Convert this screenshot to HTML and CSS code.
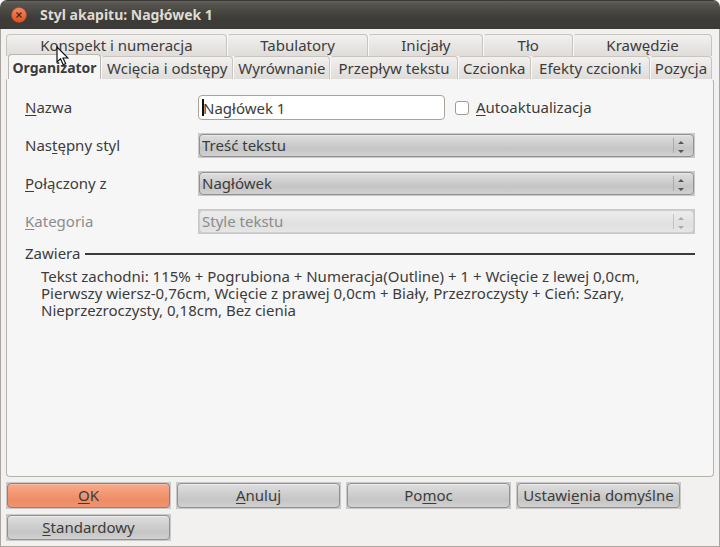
FILE: index.html
```html
<!DOCTYPE html>
<html lang="pl">
<head>
<meta charset="utf-8">
<title>Styl akapitu: Nagłówek 1</title>
<link rel="stylesheet" href="styles.css">
</head>
<body>
<main class="window">
  <header class="titlebar">
    <button class="close" type="button" aria-label="Zamknij">
      <svg viewBox="0 0 16 16" width="16" height="16" aria-hidden="true">
        <defs><linearGradient id="closeFill" x1="0" y1="0" x2="0" y2="1"><stop offset="0" stop-color="#f58a61"/><stop offset="1" stop-color="#e0511f"/></linearGradient></defs>
        <circle cx="8" cy="8" r="7.5" fill="url(#closeFill)" stroke="#b5482a" stroke-width=".6"/>
        <path d="M5.5 5.5l5 5M10.5 5.5l-5 5" stroke="#4b241a" stroke-width="1.2"/>
      </svg>
    </button>
    <h1>Styl akapitu: Nagłówek 1</h1>
  </header>
  <div class="content">
    <nav class="tabs" role="tablist">
      <div class="tab-row back">
        <button class="tab" type="button" role="tab">Konspekt i numeracja</button>
        <button class="tab" type="button" role="tab">Tabulatory</button>
        <button class="tab" type="button" role="tab">Inicjały</button>
        <button class="tab" type="button" role="tab">Tło</button>
        <button class="tab" type="button" role="tab">Krawędzie</button>
      </div>
      <div class="tab-row front">
        <button class="tab selected" type="button" role="tab" aria-selected="true">Organizator</button>
        <button class="tab" type="button" role="tab">Wcięcia i odstępy</button>
        <button class="tab" type="button" role="tab">Wyrównanie</button>
        <button class="tab" type="button" role="tab">Przepływ tekstu</button>
        <button class="tab" type="button" role="tab">Czcionka</button>
        <button class="tab" type="button" role="tab">Efekty czcionki</button>
        <button class="tab" type="button" role="tab">Pozycja</button>
      </div>
    </nav>
    <section class="panel" role="tabpanel">
      <div class="form">
        <label for="name"><u>N</u>azwa</label>
        <div class="name-line">
          <div class="text-box"><input id="name" type="text" value="Nagłówek 1"><span class="caret"></span></div>
          <input id="auto" class="check" type="checkbox">
          <label for="auto"><u>A</u>utoaktualizacja</label>
        </div>
        <label for="next">Nas<u>t</u>ępny styl</label>
        <div class="combo">
          <select id="next"><option>Treść tekstu</option></select>
          <svg class="arrows" viewBox="0 0 14 15" width="14" height="15" aria-hidden="true"><path class="rule" d="M.5 0v15"/><path d="M5 6l3-3 3 3zM5 12l3 3 3-3z"/></svg>
        </div>
        <label for="linked"><u>P</u>ołączony z</label>
        <div class="combo">
          <select id="linked"><option>Nagłówek</option></select>
          <svg class="arrows" viewBox="0 0 14 15" width="14" height="15" aria-hidden="true"><path class="rule" d="M.5 0v15"/><path d="M5 6l3-3 3 3zM5 12l3 3 3-3z"/></svg>
        </div>
        <label for="category" class="muted"><u>K</u>ategoria</label>
        <div class="combo disabled">
          <select id="category" disabled><option>Style tekstu</option></select>
          <svg class="arrows" viewBox="0 0 14 15" width="14" height="15" aria-hidden="true"><path class="rule" d="M.5 0v15"/><path d="M5 6l3-3 3 3zM5 12l3 3 3-3z"/></svg>
        </div>
      </div>
      <h2>Zawiera</h2>
      <p>Tekst zachodni: 115% + Pogrubiona + Numeracja(Outline) + 1 + Wcięcie z lewej 0,0cm,<br>Pierwszy wiersz-0,76cm, Wcięcie z prawej 0,0cm + Biały, Przezroczysty + Cień: Szary,<br>Nieprzezroczysty, 0,18cm, Bez cienia</p>
    </section>
    <footer class="actions">
      <button class="action primary" type="button"><span><u>O</u>K</span></button>
      <button class="action" type="button"><span><u>A</u>nuluj</span></button>
      <button class="action" type="button"><span>Po<u>m</u>oc</span></button>
      <button class="action" type="button"><span>Ustawi<u>e</u>nia domyślne</span></button>
      <button class="action" type="button"><span><u>S</u>tandardowy</span></button>
    </footer>
  </div>
  <svg class="pointer" viewBox="0 0 13 20" width="13" height="20" aria-hidden="true"><path d="M1 1v15l3.5-3.2 2.7 6 2.5-1.2-2.7-5.6H12z" fill="#fff" stroke="#111" stroke-width="1.2"/></svg>
</main>
</body>
</html>
```
FILE: styles.css
```css
* { box-sizing: border-box; }

body {
  margin: 0;
  background: #fff;
  color: #3c3c3c;
  font: 15px/17px "Noto Sans", "Open Sans", sans-serif;
}

button, input, select { font: inherit; color: inherit; margin: 0; }

u { text-decoration: underline; text-underline-offset: 2px; text-decoration-skip-ink: none; }

.window {
  position: relative;
  display: flex;
  flex-direction: column;
  min-height: 100vh;
  background: #f2f1ef;
  border-radius: 7px 7px 0 0;
}

.titlebar {
  display: flex;
  align-items: center;
  gap: 13px;
  height: 29px;
  padding: 0 11px;
  color: #dfdbd2;
  background: linear-gradient(#3b3a36 1px, #64635c 1px, #55544e 4px, #3d3c38 18px, #3c3b37);
  border-radius: 7px 7px 0 0;
}

.titlebar h1 { margin: 0; font-size: 14px; font-weight: 700; }

.close {
  width: 16px;
  height: 16px;
  padding: 0;
  border: 0;
  background: none;
}

.close svg { display: block; }

.content {
  flex: 1;
  display: flex;
  flex-direction: column;
  padding: 5px;
  border: 1px solid #aaa69f;
  border-top: 0;
}

.tabs { padding-right: 2px; }

.tab-row { display: grid; height: 22px; }

.back { grid-template-columns: 221fr 142fr 115fr 90fr 139fr; }

.front {
  grid-template-columns: 93fr 132fr 97fr 127fr 73fr 119fr 62fr;
  height: 23px;
  padding-left: 2px;
}

.tab {
  min-width: 0;
  padding: 0;
  border: 1px solid #c8c5c0;
  border-left-color: #faf9f8;
  border-bottom: 0;
  border-radius: 4px 4px 0 0;
  background: linear-gradient(#f2f1f0, #dfdcd9);
  white-space: nowrap;
}

.tab:first-child { border-left-color: #c8c5c0; }

.tab.selected {
  margin-top: -2px;
  border-color: #b9b5af;
  background: #f6f6f6;
  font-size: 14px;
  font-weight: 700;
}

.panel {
  flex: 1;
  padding: 15px 18px;
  border: 1px solid #b5b2ad;
  border-top-color: #f6f6f6;
  border-radius: 0 3px 4px 4px;
  background: #f6f6f6;
}

.form {
  display: grid;
  grid-template-columns: 173px 1fr;
  row-gap: 13px;
  align-items: center;
}

.name-line { display: flex; align-items: center; }

.text-box { position: relative; flex: 0 1 247px; min-width: 0; }

.text-box input {
  display: block;
  width: 100%;
  height: 25px;
  padding: 0 4px;
  border: 1px solid #aaa49d;
  border-radius: 4px;
  background: #fff;
}

.caret {
  position: absolute;
  left: 4px;
  top: 4px;
  width: 2px;
  height: 17px;
  background: #111;
}

.check {
  appearance: none;
  flex: none;
  width: 14px;
  height: 14px;
  margin: 0 7px 0 10px;
  border: 1px solid #a09b94;
  border-radius: 3px;
  background: #fff;
}

.combo {
  position: relative;
  height: 25px;
  padding: 1px;
  background: #c9c9c9;
}

.combo select {
  appearance: none;
  display: block;
  width: 100%;
  height: 23px;
  padding: 0 26px 0 2px;
  border: 1px solid #929292;
  border-radius: 4px;
  background: linear-gradient(#dedede, #c5c5c5 65%, #d1d1d1);
  box-shadow: inset 0 1px #e8e8e8;
  line-height: 21px;
}

.arrows {
  position: absolute;
  right: 8px;
  top: 5px;
  fill: #555;
  pointer-events: none;
}

.rule { stroke: #aaa; }

.combo.disabled select {
  border-color: #d0d0d0;
  background: linear-gradient(#ededed, #e0e0e0 65%, #e6e6e6);
  color: #8c8c8c;
  opacity: 1;
}

.disabled .arrows { fill: #aaa; }

.disabled .rule { stroke: #c4c4c4; }

.muted { color: #8c8c8c; }

h2 {
  display: flex;
  align-items: center;
  gap: 5px;
  margin: 11px 0 6px;
  font-size: 15px;
  font-weight: 400;
}

h2::after { content: ""; flex: 1; height: 2px; background: #3c3b37; }

.panel p { margin: 0; padding-left: 16px; }

.actions {
  display: grid;
  grid-template-columns: repeat(auto-fill, 165px);
  gap: 5px;
  padding-top: 5px;
}

.action { height: 27px; padding: 1px; border: 0; background: #c9c9c9; }

.action span {
  display: block;
  padding: 3px 0;
  height: 25px;
  border: 1px solid #919191;
  border-radius: 4px;
  background: linear-gradient(#dedede, #c5c5c5 70%, #d1d1d1);
  box-shadow: inset 0 1px #ebebeb;
  white-space: nowrap;
}

.primary span {
  border-color: #8f8078;
  background: linear-gradient(#f9aa89, #ed8c65 70%, #f09470);
  box-shadow: inset 0 1px #fbbda3;
}

.pointer { position: absolute; left: 56px; top: 46px; pointer-events: none; }
```
